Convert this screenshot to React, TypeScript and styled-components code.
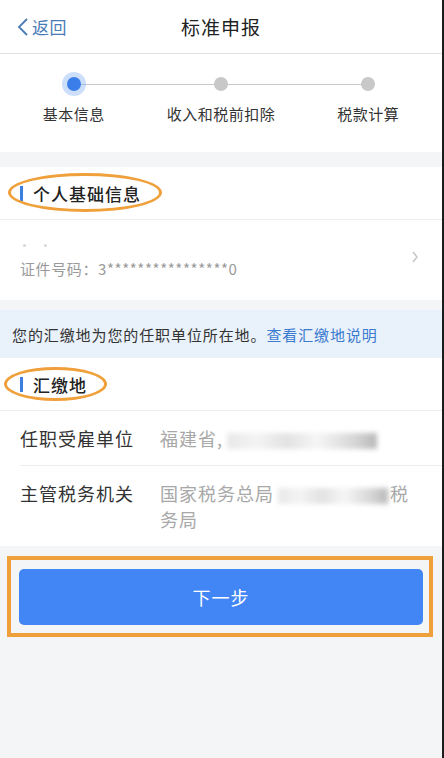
import React from "react";
import styled, { createGlobalStyle } from "styled-components";

const GlobalStyle = createGlobalStyle`
  html, body {
    margin: 0;
    padding: 0;
    background: #1c1c1c;
  }
  body {
    font-family: "Noto Sans CJK SC", "Noto Sans", sans-serif;
  }
  * {
    box-sizing: border-box;
  }
`;

const orange = "#f0a03a";
const blue = "#4285f4";

const steps = [
  { label: "基本信息", active: true },
  { label: "收入和税前扣除", active: false },
  { label: "税款计算", active: false },
];

const App: React.FunctionComponent = () => {
  return (
    <Page>
      <GlobalStyle />
      <Header>
        <Back>
          <svg width="12" height="20" viewBox="0 0 12 20">
            <polyline
              points="10,2 2,10 10,18"
              fill="none"
              stroke="#4a7cb5"
              strokeWidth="1.8"
            />
          </svg>
          返回
        </Back>
        <Title>标准申报</Title>
      </Header>

      <Stepper>
        {steps.map((step, i) => (
          <Step key={step.label} first={i === 0} last={i === steps.length - 1}>
            <Dot active={step.active} />
            <StepLabel>{step.label}</StepLabel>
          </Step>
        ))}
      </Stepper>

      <Card>
        <SectionHeader>
          <Mark />
          个人基础信息
          <Ellipse style={{ left: 8, top: 6, width: 154, height: 39 }} />
        </SectionHeader>
        <InfoRow>
          <InfoText>
            <NameLine>
              <Speck />
              <Speck />
            </NameLine>
            <IdLine>证件号码：3****************0</IdLine>
          </InfoText>
          <svg width="8" height="12" viewBox="0 0 8 12">
            <polyline
              points="2,1 6,6 2,11"
              fill="none"
              stroke="#c4c4c4"
              strokeWidth="1.4"
            />
          </svg>
        </InfoRow>
      </Card>

      <Notice>
        您的汇缴地为您的任职单位所在地。
        <NoticeLink>查看汇缴地说明</NoticeLink>
      </Notice>

      <Card>
        <SectionHeader>
          <Mark />
          汇缴地
          <Ellipse style={{ left: 4, top: 9, width: 103, height: 34 }} />
        </SectionHeader>
        <FormRow>
          <FormLabel>任职受雇单位</FormLabel>
          <FormValue>
            <span>福建省,</span>
            <Redacted width={150} />
          </FormValue>
        </FormRow>
        <FormRow tall last>
          <FormLabel>主管税务机关</FormLabel>
          <FormValue>
            <span>国家税务总局</span>
            <Redacted width={110} />
            <span>税</span>
            <span>务局</span>
          </FormValue>
        </FormRow>
      </Card>

      <Highlight>
        <NextButton>下一步</NextButton>
      </Highlight>
    </Page>
  );
};

const Page = styled.div`
  width: 442px;
  min-height: 758px;
  background: #f4f5f7;
  display: flex;
  flex-direction: column;
`;

const Header = styled.div`
  position: relative;
  height: 54px;
  background: #fff;
  border-bottom: 1px solid #e2e2e2;
  display: flex;
  align-items: center;
  justify-content: center;
`;

const Back = styled.div`
  position: absolute;
  left: 17px;
  top: 0;
  bottom: 0;
  display: flex;
  align-items: center;
  gap: 3px;
  font-size: 17px;
  color: #4a7cb5;
  letter-spacing: 0.5px;
`;

const Title = styled.div`
  font-size: 19px;
  color: #222;
  letter-spacing: 1px;
`;

const Stepper = styled.div`
  display: grid;
  grid-template-columns: repeat(3, 1fr);
  background: #fff;
  padding-top: 23px;
  height: 98px;
  margin-bottom: 15px;
`;

const Step = styled.div<{ first: boolean; last: boolean }>`
  position: relative;
  display: flex;
  flex-direction: column;
  align-items: center;

  &::before,
  &::after {
    content: "";
    position: absolute;
    top: 7px;
    height: 1px;
    background: #c9c9c9;
  }
  &::before {
    left: 0;
    right: 50%;
    display: ${(p) => (p.first ? "none" : "block")};
  }
  &::after {
    left: 50%;
    right: 0;
    display: ${(p) => (p.last ? "none" : "block")};
  }
`;

const Dot = styled.div<{ active: boolean }>`
  position: relative;
  z-index: 1;
  width: 14px;
  height: 14px;
  border-radius: 50%;
  background: ${(p) => (p.active ? "#3b7ee9" : "#c8c8c8")};
  box-shadow: ${(p) =>
    p.active ? "0 0 0 5px rgba(110, 160, 240, 0.35)" : "none"};
`;

const StepLabel = styled.div`
  margin-top: 12px;
  font-size: 15px;
  letter-spacing: 0.5px;
  color: #333;
`;

const Card = styled.div`
  background: #fff;
`;

const SectionHeader = styled.div`
  position: relative;
  height: 53px;
  display: flex;
  align-items: center;
  padding-left: 20px;
  border-bottom: 1px solid #ececec;
  font-size: 17px;
  font-weight: 500;
  letter-spacing: 1px;
  color: #222;
`;

const Mark = styled.span`
  width: 3px;
  height: 15px;
  background: #3d7fe0;
  margin-right: 10px;
`;

const Ellipse = styled.div`
  position: absolute;
  border: 3px solid ${orange};
  border-radius: 50%;
  pointer-events: none;
`;

const InfoRow = styled.div`
  height: 80px;
  display: flex;
  align-items: center;
  justify-content: space-between;
  padding: 0 23px 6px 20px;
`;

const InfoText = styled.div`
  display: flex;
  flex-direction: column;
`;

const NameLine = styled.div`
  height: 24px;
  display: flex;
  align-items: center;
  gap: 18px;
  padding-left: 3px;
`;

const Speck = styled.span`
  width: 3px;
  height: 3px;
  border-radius: 50%;
  background: #d6d6d6;
`;

const IdLine = styled.div`
  font-size: 15px;
  line-height: 24px;
  color: #9a9a9a;
  letter-spacing: 0.6px;
`;

const Notice = styled.div`
  margin-top: 10px;
  height: 48px;
  display: flex;
  align-items: center;
  padding-left: 12px;
  background: #e9f1fa;
  font-size: 15px;
  letter-spacing: 0.9px;
  color: #333;
`;

const NoticeLink = styled.span`
  color: #3b7bd0;
`;

const FormRow = styled.div<{ tall?: boolean; last?: boolean }>`
  display: flex;
  align-items: flex-start;
  margin-left: 20px;
  padding: 14px 0;
  min-height: ${(p) => (p.tall ? "80px" : "54px")};
  border-bottom: ${(p) => (p.last ? "none" : "1px solid #ececec")};
  font-size: 18px;
  line-height: 26px;
  letter-spacing: 1px;
`;

const FormLabel = styled.div`
  width: 140px;
  flex-shrink: 0;
  color: #333;
`;

const FormValue = styled.div`
  width: 250px;
  color: #a8a8a8;
`;

const Redacted = styled.span<{ width: number }>`
  display: inline-block;
  vertical-align: middle;
  width: ${(p) => p.width}px;
  height: 16px;
  margin: 0 2px 0 4px;
  background: linear-gradient(
    90deg,
    #e8e8e8 0%,
    #f4f4f4 20%,
    #e2e2e2 40%,
    #f6f6f6 60%,
    #d6d6d6 85%,
    #b8b8b8 100%
  );
  filter: blur(2.5px);
`;

const Highlight = styled.div`
  margin: 10px 9px 0 7px;
  border: 4px solid ${orange};
  padding: 9px 6px 8px 8px;
`;

const NextButton = styled.button`
  width: 100%;
  height: 56px;
  border: none;
  border-radius: 5px;
  background: ${blue};
  color: #fff;
  font-family: "Noto Sans CJK SC", "Noto Sans", sans-serif;
  font-size: 18px;
  letter-spacing: 1px;
  cursor: pointer;
`;

export default App;
